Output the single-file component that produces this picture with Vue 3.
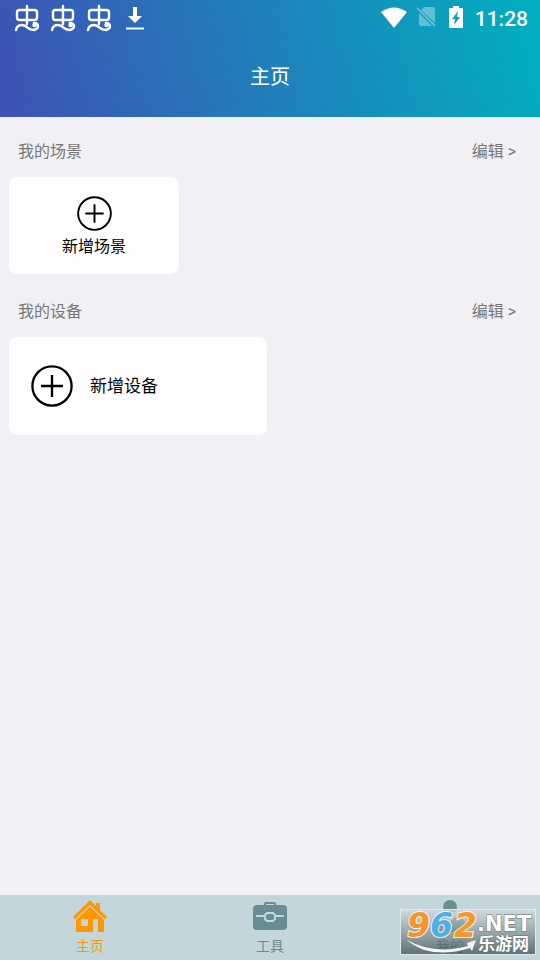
<script setup>
import { ref } from 'vue'

const sections = [
  { id: 'scene', title: '我的场景', action: '新增场景', stacked: true },
  { id: 'device', title: '我的设备', action: '新增设备', stacked: false },
]
const tabs = [
  { id: 'home', label: '主页' },
  { id: 'tools', label: '工具' },
  { id: 'mine', label: '我的' },
]
const active = ref('home')
</script>

<template>
  <div class="screen">
    <header class="top">
      <div class="status">
        <div class="notices">
          <svg v-for="n in 3" :key="n" class="bug" viewBox="0 0 26 28" aria-hidden="true">
            <rect x="3" y="6" width="20" height="10" rx="2.5" />
            <path d="M13 2V20M2 26Q3 21 8 21Q11 21 14 24Q17 26 20 26Q24 25 24 21.500Q23 19 20 19" />
            <circle cx="20.500" cy="21" r="1" />
          </svg>
          <svg class="download" viewBox="0 0 18 24" aria-hidden="true">
            <path d="M7 1h4v9h5l-7 7-7-7h5zM0 21.500h18v2H0z" />
          </svg>
        </div>
        <div class="system">
          <svg class="wifi" viewBox="0 0 28 21" aria-hidden="true">
            <path d="M0 5Q13-4 26 5L13 21z" />
          </svg>
          <svg class="sim" viewBox="0 0 20 22" aria-hidden="true">
            <path d="M8 1h9q2 0 2 2v14L5 4zM3 7l13 13H5q-2 0-2-2z" />
            <path class="slash" d="M1 2l18 18" />
          </svg>
          <svg class="battery" viewBox="0 0 14 22" aria-hidden="true">
            <path fill-rule="evenodd" d="M4 0h6v2h4v20H0V2h4zM9 5l-6 8h3l-1 6 6-8H8z" />
          </svg>
          <time class="clock">11:28</time>
        </div>
      </div>
      <h1>主页</h1>
    </header>

    <main>
      <section v-for="s in sections" :key="s.id">
        <div class="heading">
          <h2>{{ s.title }}</h2>
          <button type="button" class="edit">编辑 &gt;</button>
        </div>
        <button type="button" class="card" :class="{ stacked: s.stacked }">
          <svg class="plus" viewBox="0 0 42 42" aria-hidden="true">
            <circle cx="21" cy="21" r="19.6" />
            <path d="M21 10v22M10 21h22" />
          </svg>
          <span>{{ s.action }}</span>
        </button>
      </section>
    </main>

    <nav>
      <button
        v-for="t in tabs"
        :key="t.id"
        type="button"
        class="tab"
        :class="{ active: active === t.id }"
        @click="active = t.id"
      >
        <svg v-if="t.id === 'home'" viewBox="0 0 36 34" aria-hidden="true">
          <path d="M18 1l6 6V4h4v7l7 7-2 2.500L18 6 3 20.500 1 18z" />
          <path fill-rule="evenodd" d="M18 7.500l14 13.500v12h-6V20h-5v13H4V21zM9 20v7h7v-7z" />
        </svg>
        <svg v-else-if="t.id === 'tools'" viewBox="0 0 36 34" aria-hidden="true">
          <path class="handle" d="M13 8V5q0-1 1-1h8q1 0 1 1v3" />
          <rect x="1" y="6" width="34" height="25" rx="4" />
          <path class="clasp" d="M4 17h9M23 17h9M15 14h6l2 2v4l-2 2h-6l-2-2v-4z" />
        </svg>
        <svg v-else viewBox="0 0 36 34" aria-hidden="true">
          <circle cx="18" cy="8" r="7" />
          <path d="M3 33V26q0-8 10-8l5 5 5-5q10 0 10 8v7z" />
        </svg>
        <span>{{ t.label }}</span>
      </button>
    </nav>

    <div class="mark">
      <svg viewBox="0 0 136 46" role="img" aria-label="962.NET 乐游网">
        <defs>
          <linearGradient id="plate" x2="0" y2="1">
            <stop offset="0" stop-color="#d6dddd" />
            <stop offset="0.5" stop-color="#869394" />
            <stop offset="1" stop-color="#2f4043" />
          </linearGradient>
        </defs>
        <rect x="0.5" y="0.5" width="135" height="45" fill="url(#plate)" fill-opacity="0.68" stroke="#e2e9e9" />
        <path class="swoosh" d="M7 31Q34 46 68 37L67 34 76 31 72 42 70 39Q30 51 7 31z" />
        <g class="digits">
          <text class="orange" x="7" y="28">9</text>
          <text class="blue" x="30" y="28">6</text>
          <text class="orange" x="54" y="28">2</text>
        </g>
        <text class="net" x="77" y="22">.NET</text>
        <text class="site" x="78" y="41">乐游网</text>
      </svg>
    </div>
  </div>
</template>

<style>
body {
  margin: 0;
  background: #f0f0f5;
}
</style>

<style scoped>
.screen {
  position: relative;
  display: flex;
  flex-direction: column;
  min-height: 100vh;
  background: #f0f0f5;
  color: #000;
  font-family: Roboto, "Noto Sans CJK SC", sans-serif;
}
button {
  margin: 0;
  padding: 0;
  border: 0;
  background: none;
  color: inherit;
  font: inherit;
  cursor: pointer;
}
svg {
  display: block;
}
.top {
  background: linear-gradient(75deg, #3f51b5, #00b0bf);
  color: #fff;
}
.status {
  display: flex;
  justify-content: space-between;
  height: 36px;
  padding: 0 12px 0 14px;
}
.notices,
.system {
  display: flex;
  align-items: center;
}
.notices {
  gap: 10px;
}
.bug {
  width: 26px;
  height: 28px;
  fill: none;
  stroke: #fff;
  stroke-width: 2.4;
  stroke-linecap: round;
}
.download {
  width: 18px;
  height: 24px;
  margin-left: 4px;
  fill: #fff;
}
.system {
  height: 34px;
}
.wifi {
  width: 28px;
  height: 21px;
  fill: #fff;
}
.sim {
  width: 20px;
  height: 22px;
  margin-left: 7px;
  fill: #fff;
  opacity: 0.35;
}
.slash {
  stroke: #fff;
  stroke-width: 2;
}
.battery {
  width: 14px;
  height: 22px;
  margin-left: 13px;
  fill: #fff;
}
.clock {
  margin-left: 12px;
  font-size: 21px;
  font-weight: 500;
  line-height: 30px;
  padding-top: 4px;
}
h1 {
  margin: 0;
  padding: 26px 0 25px;
  font-size: 20px;
  font-weight: 400;
  line-height: 30px;
  text-align: center;
}
main {
  flex: 1;
  padding: 0 9px;
}
.heading {
  display: flex;
  align-items: center;
  justify-content: space-between;
  height: 60px;
  padding: 6px 15px 0 9px;
  box-sizing: border-box;
  color: #777;
  font-size: 16px;
}
section + section .heading {
  height: 63px;
  padding-top: 9px;
}
h2 {
  margin: 0;
  font-size: 16px;
  font-weight: 400;
}
.card {
  display: flex;
  align-items: center;
  gap: 17px;
  width: 50%;
  max-width: 258px;
  height: 98px;
  padding-left: 22px;
  border-radius: 8px;
  background: #fffdfe;
  font-size: 17px;
  line-height: 24px;
}
.stacked {
  flex-direction: column;
  justify-content: center;
  gap: 4px;
  width: 33%;
  max-width: 170px;
  height: 97px;
  padding: 4px 0 0;
  box-sizing: border-box;
  font-size: 16px;
}
.plus {
  width: 42px;
  height: 42px;
  fill: none;
  stroke: #000;
  stroke-width: 2.3;
}
.stacked .plus {
  width: 35px;
  height: 35px;
}
nav {
  display: grid;
  grid-template-columns: repeat(3, 1fr);
  height: 65px;
  background: #c2d6dc;
}
.tab {
  display: flex;
  flex-direction: column;
  align-items: center;
  gap: 2px;
  padding-top: 4px;
  color: #6a8d94;
  font-size: 14px;
  line-height: 22px;
}
.tab.active {
  color: #ff9800;
}
.tab svg {
  width: 36px;
  height: 34px;
  fill: currentColor;
}
.tab .handle {
  fill: none;
  stroke: currentColor;
  stroke-width: 2;
}
.tab .clasp {
  fill: none;
  stroke: #c2d6dc;
  stroke-width: 2;
}
.mark {
  position: absolute;
  right: 4px;
  bottom: 5px;
  width: 136px;
  height: 46px;
  pointer-events: none;
}
.swoosh {
  fill: #f4f6f6;
}
.digits {
  font-family: "DejaVu Sans", sans-serif;
  font-size: 33px;
  font-style: italic;
  font-weight: 700;
  stroke: #f6f4ee;
  stroke-width: 2;
  paint-order: stroke;
}
.orange {
  fill: #f6952a;
}
.blue {
  fill: #4eb0e6;
}
.net,
.site {
  fill: #fff;
  stroke: #657476;
  stroke-width: 1;
  paint-order: stroke;
}
.net {
  font-family: "DejaVu Sans", sans-serif;
  font-size: 21px;
  font-weight: 700;
}
.site {
  font-size: 17px;
  font-weight: 700;
}
</style>
